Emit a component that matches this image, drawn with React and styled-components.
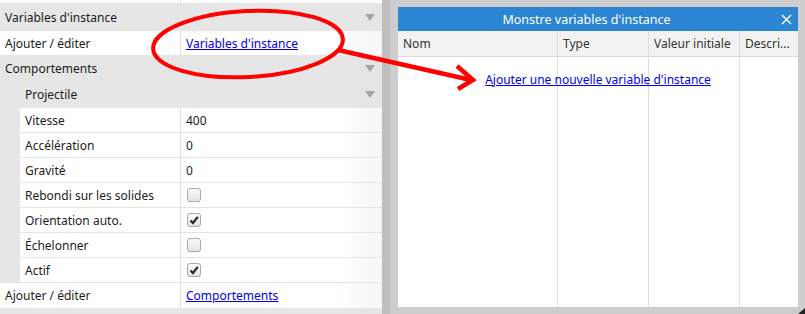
import React from 'react';
import styled, { createGlobalStyle } from 'styled-components';

const Global = createGlobalStyle`
  * { box-sizing: border-box; }
  body {
    margin: 0;
    font-family: "Noto Sans", "Open Sans", sans-serif;
    font-size: 12px;
    color: #1c1c1c;
    background: #cdcdcd;
  }
`;

const Page = styled.div`
  position: relative;
  display: flex;
  width: 805px;
  height: 314px;
  overflow: hidden;
`;

const LeftPanel = styled.div`
  width: 382px;
  flex-shrink: 0;
  display: flex;
  flex-direction: column;
  background: #e6e6e6;
`;

const Stub = styled.div`
  height: 3px;
  background: #fff;
  display: grid;
  grid-template-columns: 181px 1fr;
  div:first-child { border-right: 1px solid #ddd; }
`;

const Category = styled.div`
  height: ${({ h }) => h || 26}px;
  display: flex;
  align-items: center;
  justify-content: space-between;
  padding: 0 7px 0 ${({ indent }) => (indent ? 25 : 5)}px;
`;

const Caret = styled.span`
  width: 0;
  height: 0;
  border-left: 5px solid transparent;
  border-right: 5px solid transparent;
  border-top: 7px solid #a5a5a5;
`;

const PropRow = styled.div`
  height: ${({ h }) => h || 25}px;
  margin-left: ${({ nested }) => (nested ? 20 : 0)}px;
  display: grid;
  grid-template-columns: ${({ nested }) => (nested ? 161 : 181)}px 1fr;
  background: linear-gradient(to right, #fff 88%, #f6f6f6 100%);
  border-bottom: ${({ last }) => (last ? 'none' : '1px solid #e3e3e3')};
`;

const Label = styled.div`
  display: flex;
  align-items: center;
  padding-left: 5px;
  border-right: 1px solid #dedede;
  white-space: nowrap;
`;

const Value = styled.div`
  display: flex;
  align-items: center;
  padding-left: 5px;
`;

const Link = styled.a`
  color: #0000ee;
  text-decoration: underline;
  cursor: pointer;
`;

const Box = styled.span`
  width: 14px;
  height: 14px;
  margin-left: 1px;
  border: 1px solid #a9a9a9;
  border-radius: 3px;
  background: linear-gradient(#fbfbfb, #e4e4e4);
  display: flex;
  align-items: center;
  justify-content: center;
`;

const Scrollbar = styled.div`
  width: 8px;
  flex-shrink: 0;
  background: #bfbfbf;
`;

const Backdrop = styled.div`
  flex: 1;
  padding: 7px 7px 7px 8px;
  background: #cdcdcd;
  display: flex;
`;

const Dialog = styled.div`
  flex: 1;
  display: flex;
  flex-direction: column;
  background: #fff;
`;

const TitleBar = styled.div`
  height: 24px;
  background: #2b85d2;
  color: #fff;
  display: flex;
  align-items: center;
  font-size: 12.5px;
`;

const Title = styled.div`
  flex: 1;
  text-align: center;
`;

const Close = styled.div`
  width: 23px;
  display: flex;
  align-items: center;
  justify-content: center;
`;

const Columns = styled.div`
  display: grid;
  grid-template-columns: 160px 91px 91px 1fr;
  height: ${({ header }) => (header ? '26px' : 'auto')};
  flex: ${({ header }) => (header ? 'none' : 1)};
  background: ${({ header }) => (header ? '#f2f2f2' : '#fff')};
  border-bottom: ${({ header }) => (header ? '1px solid #dcdcdc' : 'none')};
`;

const Col = styled.div`
  display: flex;
  align-items: center;
  padding-left: 5px;
  color: #333;
  white-space: nowrap;
  overflow: hidden;
  border-right: ${({ last }) => (last ? 'none' : '1px solid #dedede')};
`;

const Body = styled.div`
  position: relative;
  flex: 1;
  display: flex;
`;

const Empty = styled.div`
  position: absolute;
  top: 0;
  left: 0;
  right: 0;
  height: 44px;
  display: flex;
  align-items: center;
  justify-content: center;
`;

const Grip = styled.svg`
  position: absolute;
  right: 0;
  bottom: 0;
`;

const Overlay = styled.svg`
  position: absolute;
  top: 0;
  left: 0;
  pointer-events: none;
`;

const Check = () => (
  <svg width="10" height="10" viewBox="0 0 10 10">
    <path d="M1.5 5.5 L4 8 L8.8 1.8" fill="none" stroke="#2a2a2a" strokeWidth="2.2" />
  </svg>
);

const behaviors = [
  ['Vitesse', '400'],
  ['Accélération', '0'],
  ['Gravité', '0'],
  ['Rebondi sur les solides', false],
  ['Orientation auto.', true],
  ['Échelonner', false],
  ['Actif', true],
];

export default function App() {
  return (
    <Page>
      <Global />
      <LeftPanel>
        <Stub><div /><div /></Stub>
        <Category h={28}>Variables d'instance<Caret /></Category>
        <PropRow h={24} last>
          <Label>Ajouter / éditer</Label>
          <Value><Link>Variables d'instance</Link></Value>
        </PropRow>
        <Category>Comportements<Caret /></Category>
        <Category indent h={27}>Projectile<Caret /></Category>
        {behaviors.map(([name, v]) => (
          <PropRow nested key={name}>
            <Label>{name}</Label>
            <Value>
              {typeof v === 'string' ? v : <Box>{v && <Check />}</Box>}
            </Value>
          </PropRow>
        ))}
        <PropRow last>
          <Label>Ajouter / éditer</Label>
          <Value><Link>Comportements</Link></Value>
        </PropRow>
      </LeftPanel>
      <Scrollbar />
      <Backdrop>
        <Dialog>
          <TitleBar>
            <Title>Monstre variables d'instance</Title>
            <Close>
              <svg width="11" height="11" viewBox="0 0 11 11">
                <path d="M1 1 L10 10 M10 1 L1 10" stroke="#fff" strokeWidth="1.5" />
              </svg>
            </Close>
          </TitleBar>
          <Columns header>
            <Col>Nom</Col>
            <Col>Type</Col>
            <Col>Valeur initiale</Col>
            <Col last>Descri...</Col>
          </Columns>
          <Body>
            <Columns>
              <Col /><Col /><Col /><Col last />
            </Columns>
            <Empty><Link>Ajouter une nouvelle variable d'instance</Link></Empty>
          </Body>
        </Dialog>
      </Backdrop>
      <Grip width="8" height="6" viewBox="0 0 8 6">
        <path d="M8 0 L8 6 L1 6 Z" fill="#222" />
      </Grip>
      <Overlay width="805" height="314" viewBox="0 0 805 314">
        <ellipse cx="248" cy="44" rx="95" ry="33" transform="rotate(-3 248 44)"
          fill="none" stroke="#ff0000" strokeWidth="4" />
        <path d="M338 50 L471 80" stroke="#ff0000" strokeWidth="4.5" />
        <path d="M457 66 L473 80 L458 89" fill="none" stroke="#ff0000"
          strokeWidth="4.5" strokeLinejoin="miter" />
      </Overlay>
    </Page>
  );
}
